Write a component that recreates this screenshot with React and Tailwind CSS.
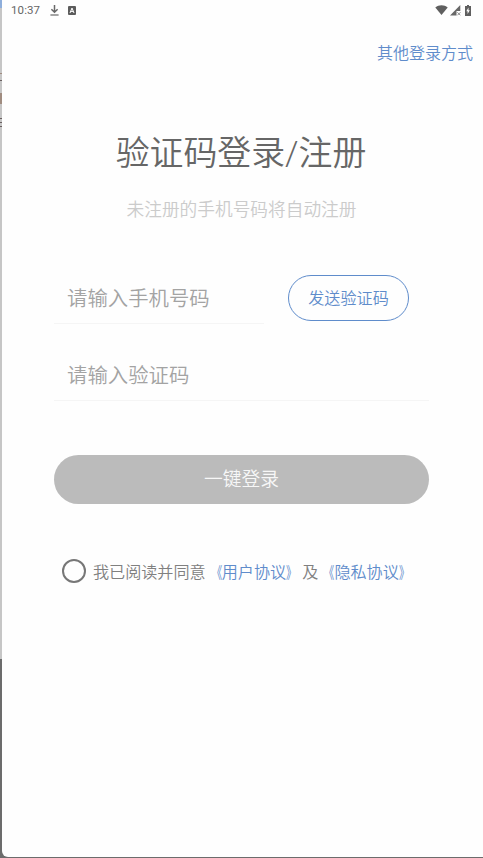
function DownloadIcon() {
  return (
    <svg className="h-[11px] w-[9px]" viewBox="0 0 9 11" fill="none" stroke="#686868">
      <path d="M4.5 0v7M1.4 4.3l3.1 3 3.1-3" strokeWidth="1.5" />
      <path d="M0.4 10h8.2" strokeWidth="1.2" />
    </svg>
  )
}

function AppBadgeIcon() {
  return (
    <svg className="h-[9px] w-2" viewBox="0 0 8 9">
      <rect width="8" height="9" rx="1" fill="#5c5c5c" />
      <path d="M2 7l2-5 2 5M2.7 5.4h2.6" fill="none" stroke="#fff" strokeWidth="1" />
    </svg>
  )
}

function WifiIcon() {
  return (
    <svg className="h-[10px] w-[13px]" viewBox="0 0 13 10" fill="#5f5f5f">
      <path d="M0.3 2.6C3.8-0.5 9.2-0.5 12.7 2.6L6.5 10z" />
    </svg>
  )
}

function SignalIcon() {
  return (
    <svg className="h-[11px] w-[11px]" viewBox="0 0 11 11">
      <path d="M10.3 0v6H6.5v4.6H0z" fill="#686868" />
      <path d="M7.4 7.3l3 3M10.4 7.3l-3 3" stroke="#8a8a8a" strokeWidth="1" />
    </svg>
  )
}

function BatteryIcon() {
  return (
    <svg className="h-[11px] w-[6px]" viewBox="0 0 6 11">
      <path d="M2 0h2v1h2v10H0V1h2z" fill="#5f5f5f" />
      <path d="M3.5 2.6L1.3 6.3h1.3v2.8l2.2-3.9H3.5z" fill="#fff" />
    </svg>
  )
}

function StatusBar() {
  return (
    <div className="flex h-5 items-center pl-[9px] pr-3 text-[#666]">
      <span className="w-[39px] text-[11.5px] leading-5 font-normal tracking-[0.1px]">10:37</span>
      <DownloadIcon />
      <span className="w-[9px]" />
      <AppBadgeIcon />
      <div className="ml-auto flex items-center">
        <WifiIcon />
        <span className="w-[2px]" />
        <SignalIcon />
        <span className="w-[4px]" />
        <BatteryIcon />
      </div>
    </div>
  )
}

// Sliver of the page that sits behind the login sheet
function PageEdge() {
  return (
    <div className="flex w-[2px] shrink-0 flex-col bg-[#c6c6c6]">
      <div className="h-[8px] bg-[#8eaedb]" />
      <div className="mt-[65px] h-px bg-[#a08c80]" />
      <div className="mt-[6px] h-px bg-[#6a6060]" />
      <div className="mt-[12px] h-[11px] bg-[#a08c80]" />
      <div className="mt-[14px] h-px bg-[#6a6060]" />
      <div className="mt-[3px] h-px bg-[#6a6060]" />
      <div className="mt-[3px] h-px bg-[#6a6060]" />
      <div className="mt-auto h-[199px] bg-[#6c6c6c]" />
    </div>
  )
}

// Agreement link with narrow book-title brackets
function AgreementLink({ children }) {
  return (
    <a className="text-[#5f8ccb]">
      <span className="inline-block origin-right scale-x-65 font-normal">《</span>
      {children}
      <span className="inline-block origin-left scale-x-65 font-normal">》</span>
    </a>
  )
}

export default function App() {
  return (
    <div className="flex h-[858px] w-[483px] overflow-hidden bg-[#6c6c6c] font-['Roboto','Noto_Sans_CJK_SC',sans-serif] font-[350]">
      <PageEdge />
      <main className="h-[857px] flex-1 rounded-bl-[6px] bg-[#fefefe]">
        <StatusBar />

        <header className="mt-[2px] flex h-16 items-center justify-end pr-[10px]">
          <a className="text-base text-[#5f8ccb]">其他登录方式</a>
        </header>

        <h1 className="mt-[42px] pr-[3px] text-center text-[33.9px] leading-[52px] text-[#666]">验证码登录/注册</h1>
        <p className="mt-[18px] pr-[2px] text-center text-[17.7px] leading-6 text-[#cbcbcb]">未注册的手机号码将自动注册</p>

        <form className="ml-[52px] w-[375px]">
          <div className="mt-[53px] flex h-[49px] items-start">
            <input
              className="h-[49px] w-[210px] border-b border-[#f5f5f5] pl-[13px] text-[20.4px] outline-none placeholder:text-[#a3a3a3]"
              placeholder="请输入手机号码"
            />
            <button type="button" className="ml-6 h-[46px] w-[121px] rounded-full border border-[#5f8ccb] pt-[2px] text-[16.1px] text-[#5f8ccb]">
              发送验证码
            </button>
          </div>
          <input
            className="mt-7 block h-[49px] w-full border-b border-[#f5f5f5] pl-[13px] text-[20.4px] outline-none placeholder:text-[#a3a3a3]"
            placeholder="请输入验证码"
          />
          <button type="button" className="mt-[54px] h-[49px] w-full rounded-full bg-[#bbb] pt-px text-[18.8px] text-[#f7f7f7]">
            一键登录
          </button>
        </form>

        <div className="mt-[55px] ml-[60px] flex items-start">
          <span className="h-6 w-6 rounded-full border-2 border-[#777]" />
          <p className="ml-[7px] pt-[2px] text-[16.1px] leading-6 whitespace-nowrap text-[#808080]">
            我已阅读并同意<AgreementLink>用户协议</AgreementLink>及<AgreementLink>隐私协议</AgreementLink>
          </p>
        </div>
      </main>
    </div>
  )
}
